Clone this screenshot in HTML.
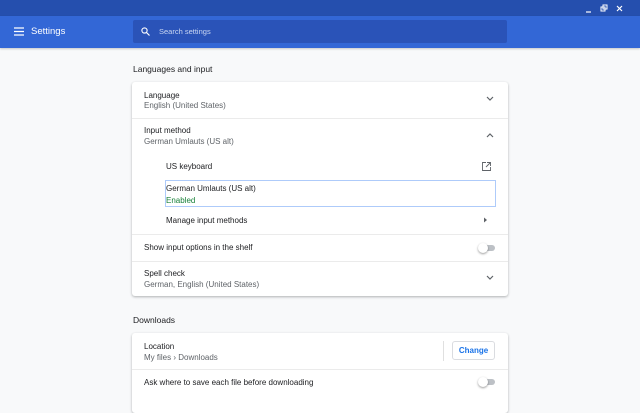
<!DOCTYPE html>
<html><head><style>
*{margin:0;padding:0;box-sizing:border-box}
body{width:640px;height:400px;overflow:hidden;background:#f8f9fa;font-family:"Liberation Sans",sans-serif;font-size:8px;color:#202124;position:relative}
.a{position:absolute}
.top{left:0;top:0;width:640px;height:16px;background:#254fae}
.hdr{left:0;top:16px;width:640px;height:32px;background:#3367d6;box-shadow:0 1px 2px rgba(0,0,0,.2)}
.search{left:133px;top:20px;width:374px;height:23px;background:#2a53b8;border-radius:2px}
.card{left:132px;width:376px;background:#fff;border-radius:3px;box-shadow:0 1px 2px rgba(60,64,67,.3),0 1px 3px rgba(60,64,67,.1)}
.t{position:absolute;white-space:nowrap}
.s{color:#5f6368}
.hr{position:absolute;left:0;width:376px;height:1px;background:#ebebeb}
.tog{position:absolute;width:16px;height:6px;border-radius:3px;background:#bdc1c6}
.tog::after{content:"";position:absolute;left:-1px;top:-2px;width:10px;height:10px;border-radius:50%;background:#fff;box-shadow:0 1px 2px rgba(0,0,0,.4)}
</style></head><body>
<div class="a top"></div>
<svg class="a" style="left:584px;top:4px" width="56" height="10"><path d="M2 8h5" stroke="#fff" stroke-width="1.2"/><rect x="17" y="3" width="4" height="4" fill="none" stroke="#fff"/><rect x="19" y="1" width="4" height="4" fill="none" stroke="#fff"/><path d="M33 2l5 5M38 2l-5 5" stroke="#fff" stroke-width="1.2"/></svg>
<div class="a hdr"></div>
<svg class="a" style="left:14px;top:27px" width="10" height="9"><path d="M0 1h10M0 4.5h10M0 8h10" stroke="#fff" stroke-width="1.3"/></svg>
<div class="t" style="left:31px;top:26px;color:#fff;font-size:9.5px">Settings</div>
<div class="a search"></div>
<svg class="a" style="left:141px;top:27px" width="9" height="9"><circle cx="3.5" cy="3.5" r="2.6" fill="none" stroke="#fff" stroke-width="1.1"/><path d="M5.5 5.5L8.5 8.5" stroke="#fff" stroke-width="1.2"/></svg>
<div class="t" style="left:159px;top:27px;color:#c9d6f2;font-size:7.5px">Search settings</div>

<div class="t" style="left:133px;top:64px;font-size:8.5px">Languages and input</div>
<div class="a card" style="top:82px;height:214px">
 <div class="t" style="left:12px;top:9px">Language</div>
 <div class="t s" style="left:12px;top:19px">English (United States)</div>
 <svg class="a" style="left:354px;top:14px" width="8" height="6"><path d="M1 1l3 3 3-3" fill="none" stroke="#5f6368" stroke-width="1.2"/></svg>
 <div class="hr" style="top:36px"></div>
 <div class="t" style="left:12px;top:44px">Input method</div>
 <div class="t s" style="left:12px;top:55px">German Umlauts (US alt)</div>
 <svg class="a" style="left:354px;top:50px" width="8" height="6"><path d="M1 5l3-3 3 3" fill="none" stroke="#5f6368" stroke-width="1.2"/></svg>
 <div class="t" style="left:34px;top:80px">US keyboard</div>
 <svg class="a" style="left:350px;top:80px" width="9" height="9"><path d="M4 .5H.5v8h8V5M5 .5h3.5V4M8.5.5L4 5" fill="none" stroke="#5f6368" stroke-width="0.9"/></svg>
 <div class="a" style="left:33px;top:98px;width:331px;height:27px;border:1px solid #aecbfa"></div>
 <div class="t" style="left:34px;top:102px">German Umlauts (US alt)</div>
 <div class="t" style="left:34px;top:114px;color:#188038">Enabled</div>
 <div class="t" style="left:34px;top:134px">Manage input methods</div>
 <svg class="a" style="left:351px;top:135px" width="5" height="6"><path d="M1 0.5l3 2.5-3 2.5z" fill="#5f6368"/></svg>
 <div class="hr" style="top:152px"></div>
 <div class="t" style="left:12px;top:161px">Show input options in the shelf</div>
 <div class="tog" style="left:347px;top:163px"></div>
 <div class="hr" style="top:179px"></div>
 <div class="t" style="left:12px;top:187px">Spell check</div>
 <div class="t s" style="left:12px;top:198px">German, English (United States)</div>
 <svg class="a" style="left:354px;top:193px" width="8" height="6"><path d="M1 1l3 3 3-3" fill="none" stroke="#5f6368" stroke-width="1.2"/></svg>
</div>

<div class="t" style="left:133px;top:315px;font-size:8.5px">Downloads</div>
<div class="a card" style="top:333px;height:80px">
 <div class="t" style="left:12px;top:9px">Location</div>
 <div class="t s" style="left:12px;top:20px">My files › Downloads</div>
 <div class="a" style="left:311px;top:8px;width:1px;height:20px;background:#e0e0e0"></div>
 <div class="a" style="left:320px;top:8px;width:43px;height:19px;border:1px solid #dadce0;border-radius:3px;color:#1a73e8;text-align:center;line-height:17px;font-weight:bold">Change</div>
 <div class="hr" style="top:36px"></div>
 <div class="t" style="left:12px;top:45px">Ask where to save each file before downloading</div>
 <div class="tog" style="left:347px;top:46px"></div>
</div>
</body></html>
